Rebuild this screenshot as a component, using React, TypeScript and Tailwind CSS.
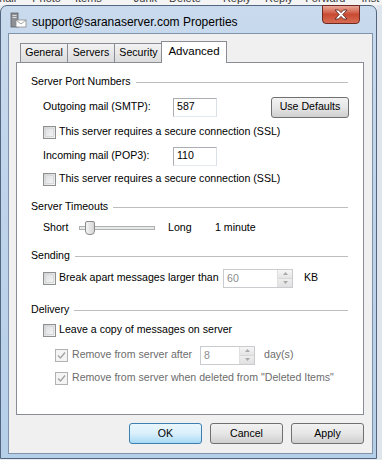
import React from 'react';

function Check({checked = false, disabled = false}: {checked?: boolean; disabled?: boolean}) {
	return (
		<div
			className={
				'flex h-[13px] w-[13px] shrink-0 items-center justify-center border ' +
				(disabled ? 'border-[#b1b1b1] bg-[#f4f4f4]' : 'border-[#8e8f8f] bg-gradient-to-br from-[#cfd2d6] to-[#f7f7f7]')
			}
		>
			<div className={'h-[9px] w-[9px] ' + (disabled ? '' : 'border border-[#d6d8da] bg-gradient-to-br from-[#dedfe1] to-[#f4f4f4]')}>
				{checked && (
					<svg width="9" height="9" viewBox="0 0 9 9">
						<path d="M1 4.5 L3.5 7 L8 1.5" fill="none" stroke="#a3a3a3" strokeWidth="1.4" />
					</svg>
				)}
			</div>
		</div>
	);
}

function Section({title}: {title: string}) {
	return (
		<div className="flex h-[18px] items-center gap-[5px] pl-[14px] pr-[15px]">
			<span>{title}</span>
			<div className="h-px flex-1 bg-[#bdbdbd]" />
		</div>
	);
}

function Spinner({value, width}: {value: string; width: string}) {
	return (
		<div className={'flex h-[19px] shrink-0 items-stretch border border-[#c9cbcf] bg-white ' + width}>
			<span className="flex-1 pl-[3px] leading-[17px] text-[#8d8d8d]">{value}</span>
			<div className="flex w-[15px] flex-col border-l border-[#e0e0e0]">
				<div className="flex flex-1 items-center justify-center border-b border-[#d8d8d8] bg-gradient-to-b from-[#f6f6f6] to-[#e4e4e4]">
					<svg width="5" height="3" viewBox="0 0 5 3">
						<path d="M0 3 L2.5 0 L5 3 Z" fill="#a9a9a9" />
					</svg>
				</div>
				<div className="flex flex-1 items-center justify-center bg-gradient-to-b from-[#eeeeee] to-[#e0e0e0]">
					<svg width="5" height="3" viewBox="0 0 5 3">
						<path d="M0 0 L2.5 3 L5 0 Z" fill="#a9a9a9" />
					</svg>
				</div>
			</div>
		</div>
	);
}

function Btn({label, primary = false}: {label: string; primary?: boolean}) {
	return (
		<div
			className={
				'flex h-[21px] w-[73px] items-center justify-center rounded-[3px] border ' +
				(primary
					? 'border-[#3c7fb1] bg-gradient-to-b from-[#eaf6fd] via-[#d9f0fc] to-[#a7d9f5]'
					: 'border-[#707070] bg-gradient-to-b from-[#f2f2f2] via-[#e6e6e6] to-[#cfcfcf]')
			}
		>
			{label}
		</div>
	);
}

export default function App() {
	return (
		<div className="relative h-[460px] w-[382px] overflow-hidden whitespace-nowrap bg-[#e9edf2] font-['Liberation_Sans',Arial,sans-serif] text-[10.6px] text-black">
			<div className="h-[5px] overflow-hidden bg-[#f4f4f4]">
				<div className="-mt-[8px] flex text-[11px] leading-[12px] text-[#3a3a3a]">
					<span className="ml-[-4px]">mail</span>
					<span className="ml-[16px]">Photo</span>
					<span className="ml-[14px]">Items</span>
					<span className="ml-[32px]">Junk</span>
					<span className="ml-[12px]">Delete</span>
					<span className="ml-[22px]">Reply</span>
					<span className="ml-[14px]">Reply</span>
					<span className="ml-[12px]">Forward</span>
					<span className="ml-[16px]">Inst</span>
				</div>
			</div>
			<div className="flex">
				<div className="flex h-[454px] w-[377px] flex-col rounded-t-[7px] border border-[#52677f] bg-gradient-to-b from-[#c9daed] via-[#bdd3ea] to-[#b6cfe9] pb-[4px] pl-[7px] pr-[3px]">
					<div className="flex h-[27px] items-start">
						<svg className="mt-[6px] ml-[2px]" width="17" height="17" viewBox="0 0 17 17">
							<rect x="1" y="1" width="7" height="14" fill="#8d9196" stroke="#5c6066" strokeWidth="0.8" />
							<rect x="2.5" y="3" width="4" height="1" fill="#d9dbdd" />
							<rect x="2.5" y="5" width="4" height="1" fill="#d9dbdd" />
							<rect x="6" y="8" width="10" height="7" fill="#ffffff" stroke="#8a8a8a" strokeWidth="0.8" />
							<path d="M6 8 L11 12 L16 8" fill="none" stroke="#8a8a8a" strokeWidth="0.8" />
						</svg>
						<span className="ml-[5px] mt-[7px] text-[12px] text-black">support@saranaserver.com Properties</span>
						<div className="ml-auto mr-[13px] -mt-px flex h-[19px] w-[38px] items-center justify-center rounded-b-[4px] border border-[#6e2a22] bg-gradient-to-b from-[#e9a99a] via-[#c94a33] to-[#d66c52]">
							<svg width="14" height="11" viewBox="0 0 14 11">
								<path
									d="M1 1 L4.5 1 L7 3.6 L9.5 1 L13 1 L8.8 5.5 L13 10 L9.5 10 L7 7.4 L4.5 10 L1 10 L5.2 5.5 Z"
									fill="#ffffff"
									stroke="#5a2a24"
									strokeWidth="0.9"
								/>
							</svg>
						</div>
					</div>
					<div className="flex flex-1 flex-col border border-[#7f93ab] bg-[#f0f0f0]">
						<div className="ml-[7px] mt-[7px] w-[348px]">
							<div className="relative z-10 flex h-[21px] items-end pl-[4px]">
								<div className="flex h-[19px] w-[48px] items-center justify-center border border-b-0 border-[#898c95] bg-gradient-to-b from-[#f3f3f3] to-[#dcdcdc]">
									General
								</div>
								<div className="-ml-px flex h-[19px] w-[48px] items-center justify-center border border-b-0 border-[#898c95] bg-gradient-to-b from-[#f3f3f3] to-[#dcdcdc]">
									Servers
								</div>
								<div className="-ml-px flex h-[19px] w-[49px] items-center justify-center border border-b-0 border-[#898c95] bg-gradient-to-b from-[#f3f3f3] to-[#dcdcdc]">
									Security
								</div>
								<div className="-ml-[2px] -mb-px flex h-[22px] w-[66px] items-center justify-center border border-b-0 border-[#898c95] bg-white pb-[2px] text-[11.5px]">
									Advanced
								</div>
							</div>
							<div className="flex h-[353px] flex-col border border-[#898c95] bg-white">
								<div className="mt-[10px]">
									<Section title="Server Port Numbers" />
								</div>
								<div className="mt-[6px] flex h-[20px] items-center pl-[26px] pr-[14px]">
									<span className="w-[130px]">Outgoing mail (SMTP):</span>
									<div className="flex h-[19px] w-[44px] items-center border border-[#abadb3] border-b-[#e3e9ef] border-r-[#dbdfe6] pl-[3px]">587</div>
									<div className="ml-auto flex h-[21px] w-[78px] items-center justify-center rounded-[3px] border border-[#707070] bg-gradient-to-b from-[#f2f2f2] via-[#e6e6e6] to-[#cfcfcf]">
										Use Defaults
									</div>
								</div>
								<div className="mt-[6px] flex h-[18px] items-center gap-[3px] pl-[26px]">
									<Check />
									<span>This server requires a secure connection (SSL)</span>
								</div>
								<div className="mt-[5px] flex h-[20px] items-center pl-[26px]">
									<span className="w-[130px]">Incoming mail (POP3):</span>
									<div className="flex h-[19px] w-[44px] items-center border border-[#abadb3] border-b-[#e3e9ef] border-r-[#dbdfe6] pl-[3px]">110</div>
								</div>
								<div className="mt-[4px] flex h-[18px] items-center gap-[3px] pl-[26px]">
									<Check />
									<span>This server requires a secure connection (SSL)</span>
								</div>
								<div className="mt-[10px]">
									<Section title="Server Timeouts" />
								</div>
								<div className="mt-[3px] flex h-[18px] items-center pl-[26px]">
									<span className="w-[36px]">Short</span>
									<div className="relative flex h-[14px] w-[76px] items-center">
										<div className="h-[4px] w-full border border-[#b0b0b0] bg-[#e7eaea]" />
										<div className="absolute left-[6px] top-0 h-[14px] w-[10px] rounded-b-[4px] rounded-t-[2px] border border-[#8a8a8a] bg-gradient-to-r from-[#f4f4f4] to-[#d6d6d6]" />
									</div>
									<span className="ml-[13px] w-[47px]">Long</span>
									<span>1 minute</span>
								</div>
								<div className="mt-[10px]">
									<Section title="Sending" />
								</div>
								<div className="mt-[3px] flex h-[20px] items-center pl-[26px]">
									<Check />
									<span className="ml-[3px] w-[164px]">Break apart messages larger than</span>
									<Spinner value="60" width="w-[70px]" />
									<span className="ml-[11px]">KB</span>
								</div>
								<div className="mt-[13px]">
									<Section title="Delivery" />
								</div>
								<div className="mt-[2px] flex h-[18px] items-center gap-[3px] pl-[26px]">
									<Check />
									<span>Leave a copy of messages on server</span>
								</div>
								<div className="mt-[6px] flex h-[20px] items-center pl-[38px] text-[#6d6d6d]">
									<Check checked disabled />
									<span className="ml-[4px] w-[128px]">Remove from server after</span>
									<Spinner value="8" width="w-[55px]" />
									<span className="ml-[9px]">day(s)</span>
								</div>
								<div className="mt-[4px] flex h-[18px] items-center pl-[38px] text-[#6d6d6d]">
									<Check checked disabled />
									<span className="ml-[4px]">Remove from server when deleted from "Deleted Items"</span>
								</div>
							</div>
							<div className="mt-[8px] flex justify-end gap-[8px]">
								<Btn label="OK" primary />
								<Btn label="Cancel" />
								<Btn label="Apply" />
							</div>
						</div>
					</div>
				</div>
				<div className="flex-1 bg-[#dfe5ec]" />
			</div>
		</div>
	);
}
